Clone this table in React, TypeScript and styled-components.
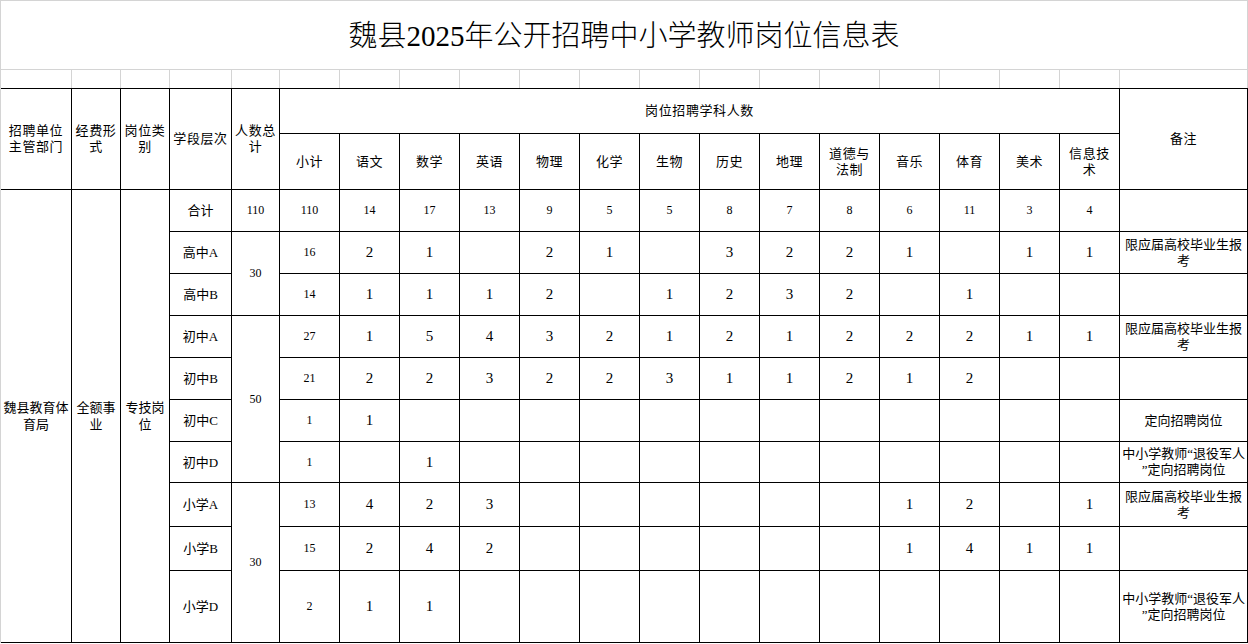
import styled, { createGlobalStyle } from 'styled-components'

const GRID = '#d4d4d4'
const LINE = '#000'

const GlobalStyle = createGlobalStyle`
  html, body {
    margin: 0;
    padding: 0;
    background: #fff;
  }
  body {
    font-family: "Liberation Serif", "Noto Sans CJK SC", serif;
    color: #000;
  }
`

const Sheet = styled.table`
  width: 1248px;
  table-layout: fixed;
  border-collapse: separate;
  border-spacing: 0;
  border-top: 1px solid ${GRID};
  border-left: 1px solid ${GRID};
  font-family: "Liberation Serif", "Noto Sans CJK SC", serif;
`

const Col = styled.col<{ $w: number }>`
  width: ${props => props.$w}px;
`

const Row = styled.tr<{ $h: number }>`
  height: ${props => props.$h}px;
`

const TitleCell = styled.td`
  box-sizing: border-box;
  border-right: 1px solid ${GRID};
  border-bottom: 1px solid ${GRID};
  text-align: center;
  vertical-align: middle;
  font-size: 29px;
  font-weight: 300;
  padding: 0 0 5px 0;
`

const GapCell = styled.td`
  box-sizing: border-box;
  border-right: 1px solid ${GRID};
  padding: 0;
`

const HeadCell = styled.td<{ $top?: boolean }>`
  box-sizing: border-box;
  border-right: 1px solid ${LINE};
  border-bottom: 1px solid ${LINE};
  border-top: ${props => props.$top ? `1px solid ${LINE}` : 'none'};
  text-align: center;
  vertical-align: middle;
  font-size: 13px;
  letter-spacing: 0.6px;
  line-height: 16px;
  white-space: pre-line;
  padding: 0 1px;
`

const LabelCell = styled.td`
  box-sizing: border-box;
  border-right: 1px solid ${LINE};
  border-bottom: 1px solid ${LINE};
  text-align: center;
  vertical-align: middle;
  font-size: 13px;
  line-height: 17px;
  white-space: pre-line;
  padding: 0;
`

const NumCell = styled.td<{ $big?: boolean }>`
  box-sizing: border-box;
  border-right: 1px solid ${LINE};
  border-bottom: 1px solid ${LINE};
  text-align: center;
  vertical-align: middle;
  font-size: ${props => props.$big ? 15 : 12}px;
  padding: 0;
`

const NoteCell = styled.td`
  box-sizing: border-box;
  border-right: 1px solid ${LINE};
  border-bottom: 1px solid ${LINE};
  text-align: center;
  vertical-align: middle;
  font-size: 13px;
  line-height: 16px;
  white-space: pre-line;
  padding: 0 2px;
`

const widths = [71, 49, 49, 62, 48, 60, 60, 60, 60, 60, 60, 60, 60, 60, 60, 60, 60, 60, 60, 128]

const subjects = ['语文', '数学', '英语', '物理', '化学', '生物', '历史', '地理', '道德与\n法制', '音乐', '体育', '美术', '信息技\n术']

const FRESH = '限应届高校毕业生报\n考'
const VETERAN = '中小学教师“退役军人\n”定向招聘岗位'

type Cnt = number | ''

interface Line {
  level: string
  height: number
  group?: { value: number; span: number }
  sub: number
  counts: Cnt[]
  note: string
}

const lines: Line[] = [
  { level: '高中A', height: 42, group: { value: 30, span: 2 }, sub: 16, counts: [2, 1, '', 2, 1, '', 3, 2, 2, 1, '', 1, 1], note: FRESH },
  { level: '高中B', height: 42, sub: 14, counts: [1, 1, 1, 2, '', 1, 2, 3, 2, '', 1, '', ''], note: '' },
  { level: '初中A', height: 42, group: { value: 50, span: 4 }, sub: 27, counts: [1, 5, 4, 3, 2, 1, 2, 1, 2, 2, 2, 1, 1], note: FRESH },
  { level: '初中B', height: 42, sub: 21, counts: [2, 2, 3, 2, 2, 3, 1, 1, 2, 1, 2, '', ''], note: '' },
  { level: '初中C', height: 42, sub: 1, counts: [1, '', '', '', '', '', '', '', '', '', '', '', ''], note: '定向招聘岗位' },
  { level: '初中D', height: 41, sub: 1, counts: ['', 1, '', '', '', '', '', '', '', '', '', '', ''], note: VETERAN },
  { level: '小学A', height: 44, group: { value: 30, span: 3 }, sub: 13, counts: [4, 2, 3, '', '', '', '', '', '', 1, 2, '', 1], note: FRESH },
  { level: '小学B', height: 44, sub: 15, counts: [2, 4, 2, '', '', '', '', '', '', 1, 4, 1, 1], note: '' },
  { level: '小学D', height: 72, sub: 2, counts: [1, 1, '', '', '', '', '', '', '', '', '', '', ''], note: VETERAN },
]

const totals = [14, 17, 13, 9, 5, 5, 8, 7, 8, 6, 11, 3, 4]

export default function App() {
  return (
    <>
      <GlobalStyle />
      <Sheet>
        <colgroup>
          {widths.map((w, i) => <Col key={i} $w={w} />)}
        </colgroup>
        <tbody>
          <Row $h={69}>
            <TitleCell colSpan={20}>魏县2025年公开招聘中小学教师岗位信息表</TitleCell>
          </Row>
          <Row $h={18}>
            {widths.map((_, i) => <GapCell key={i} />)}
          </Row>
          <Row $h={46}>
            <HeadCell $top rowSpan={2}>{'招聘单位\n主管部门'}</HeadCell>
            <HeadCell $top rowSpan={2}>{'经费形\n式'}</HeadCell>
            <HeadCell $top rowSpan={2}>{'岗位类\n别'}</HeadCell>
            <HeadCell $top rowSpan={2}>学段层次</HeadCell>
            <HeadCell $top rowSpan={2}>{'人数总\n计'}</HeadCell>
            <HeadCell $top colSpan={14}>岗位招聘学科人数</HeadCell>
            <HeadCell $top rowSpan={2}>备注</HeadCell>
          </Row>
          <Row $h={56}>
            <HeadCell>小计</HeadCell>
            {subjects.map(s => <HeadCell key={s}>{s}</HeadCell>)}
          </Row>
          <Row $h={42}>
            <LabelCell rowSpan={10}>{'魏县教育体\n育局'}</LabelCell>
            <LabelCell rowSpan={10}>{'全额事\n业'}</LabelCell>
            <LabelCell rowSpan={10}>{'专技岗\n位'}</LabelCell>
            <LabelCell>合计</LabelCell>
            <NumCell>110</NumCell>
            <NumCell>110</NumCell>
            {totals.map((t, i) => <NumCell key={i}>{t}</NumCell>)}
            <NoteCell />
          </Row>
          {lines.map(line => (
            <Row key={line.level} $h={line.height}>
              <LabelCell>{line.level}</LabelCell>
              {line.group && <NumCell rowSpan={line.group.span}>{line.group.value}</NumCell>}
              <NumCell>{line.sub}</NumCell>
              {line.counts.map((c, i) => <NumCell key={i} $big>{c}</NumCell>)}
              <NoteCell>{line.note}</NoteCell>
            </Row>
          ))}
        </tbody>
      </Sheet>
    </>
  )
}
